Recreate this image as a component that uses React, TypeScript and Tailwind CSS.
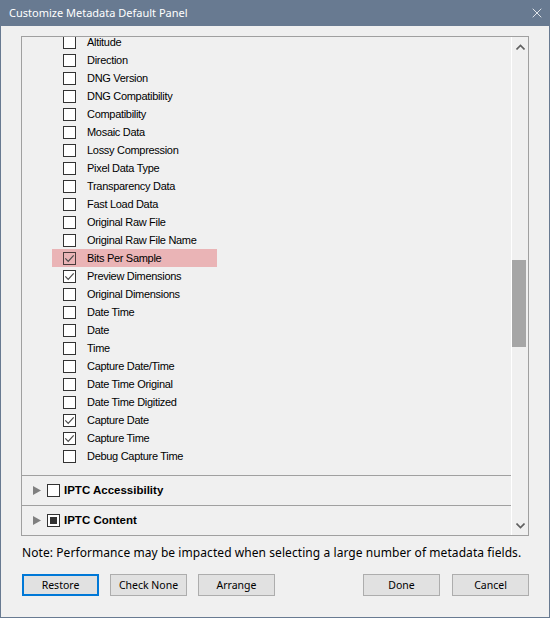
import { X } from "lucide-react";

type Field = { label: string; checked?: boolean; highlight?: boolean };

const fields: Field[] = [
  { label: "Altitude" },
  { label: "Direction" },
  { label: "DNG Version" },
  { label: "DNG Compatibility" },
  { label: "Compatibility" },
  { label: "Mosaic Data" },
  { label: "Lossy Compression" },
  { label: "Pixel Data Type" },
  { label: "Transparency Data" },
  { label: "Fast Load Data" },
  { label: "Original Raw File" },
  { label: "Original Raw File Name" },
  { label: "Bits Per Sample", checked: true, highlight: true },
  { label: "Preview Dimensions", checked: true },
  { label: "Original Dimensions" },
  { label: "Date Time" },
  { label: "Date" },
  { label: "Time" },
  { label: "Capture Date/Time" },
  { label: "Date Time Original" },
  { label: "Date Time Digitized" },
  { label: "Capture Date", checked: true },
  { label: "Capture Time", checked: true },
  { label: "Debug Capture Time" },
];

const uiFont = "font-['Noto_Sans','Open_Sans',sans-serif]";
const listFont = "font-['Liberation_Sans',Arial,sans-serif]";

const CheckBox = ({ checked, tinted }: { checked?: boolean; tinted?: boolean }) => (
  <span
    className={`w-[13px] h-[13px] shrink-0 border flex items-center justify-center ${
      tinted ? "border-[#4a3a3a] bg-transparent" : "border-[#333] bg-white"
    }`}
  >
    {checked && (
      <svg width="11" height="11" viewBox="0 0 11 11">
        <path d="M1.3 5.3 L4.2 8.3 L9.7 2.3" fill="none" stroke="#4a4a4a" strokeWidth="1.2" />
      </svg>
    )}
  </span>
);

const Button = ({ label, primary }: { label: string; primary?: boolean }) => (
  <button
    className={`w-[77px] h-[22px] pt-[2px] bg-[#e1e1e1] text-[10.5px] text-black border ${
      primary ? "border-[#0078d7] border-[2px]" : "border-[#adadad]"
    }`}
  >
    {label}
  </button>
);

const SectionRow = ({ label, mixed }: { label: string; mixed?: boolean }) => (
  <div className="h-[29px] flex items-center pl-[11px]">
    <svg width="8" height="9" viewBox="0 0 8 9" className="shrink-0">
      <path d="M0 0 L8 4.5 L0 9 Z" fill="#808080" />
    </svg>
    <span className="ml-[6px] w-[13px] h-[13px] border border-[#333] bg-white flex items-center justify-center">
      {mixed && <span className="w-[7px] h-[7px] bg-[#333]" />}
    </span>
    <span className={`ml-[4px] text-[11.5px] font-bold text-black ${listFont}`}>{label}</span>
  </div>
);

export default function App() {
  return (
    <div className={`w-[550px] h-[618px] flex flex-col bg-[#f0f0f0] ${uiFont}`}>
      {/* Title bar */}
      <header className="h-[26px] bg-[#687a91] flex items-center justify-between pl-[9px] pr-[5px] shrink-0">
        <span className="text-white text-[11px]">Customize Metadata Default Panel</span>
        <X size={16} strokeWidth={1.2} className="text-white" />
      </header>

      <div className="flex-1 flex flex-col border-x border-b border-[#687a91] px-[20px] pt-[10px]">
        {/* Field panel */}
        <div className="h-[500px] border border-[#a0a0a0] flex">
          <div className="flex-1 flex flex-col">
            <div className="h-[438px] overflow-hidden">
              <div className="-mt-[4px] flex flex-col">
                {fields.map((f) => (
                  <div key={f.label} className="h-[18px] pl-[30px] flex">
                    <div
                      className={`w-[165px] flex items-center pl-[11px] ${
                        f.highlight ? "bg-[#eab4b6]" : ""
                      }`}
                    >
                      <CheckBox checked={f.checked} tinted={f.highlight} />
                      <span
                        className={`ml-[11px] text-[11px] tracking-[-0.3px] text-black whitespace-nowrap ${listFont}`}
                      >
                        {f.label}
                      </span>
                    </div>
                  </div>
                ))}
              </div>
            </div>
            <div className="border-t border-[#a0a0a0]">
              <SectionRow label="IPTC Accessibility" />
            </div>
            <div className="border-t border-[#a0a0a0]">
              <SectionRow label="IPTC Content" mixed />
            </div>
          </div>

          {/* Scrollbar */}
          <div className="w-[17px] border-l border-white flex flex-col">
            <div className="h-[17px] flex items-center justify-center pt-[2px]">
              <svg width="9" height="6" viewBox="0 0 9 6">
                <path d="M0.5 5.5 L4.5 1.5 L8.5 5.5" fill="none" stroke="#606060" strokeWidth="1.6" />
              </svg>
            </div>
            <div className="flex-1">
              <div className="mt-[206px] w-[14px] h-[87px] bg-[#a6a6a6]" />
            </div>
            <div className="h-[17px] flex items-center justify-center pb-[2px]">
              <svg width="9" height="6" viewBox="0 0 9 6">
                <path d="M0.5 0.5 L4.5 4.5 L8.5 0.5" fill="none" stroke="#606060" strokeWidth="1.6" />
              </svg>
            </div>
          </div>
        </div>

        <p className="mt-[9px] text-[12px] leading-[16px] tracking-[0.07px] text-black pl-[1px]">
          Note: Performance may be impacted when selecting a large number of metadata fields.
        </p>

        <div className="mt-[13px] flex items-center pl-[1px]">
          <div className="flex gap-[11px]">
            <Button label="Restore" primary />
            <Button label="Check None" />
            <Button label="Arrange" />
          </div>
          <div className="ml-auto flex gap-[12px]">
            <Button label="Done" />
            <Button label="Cancel" />
          </div>
        </div>
      </div>
    </div>
  );
}
